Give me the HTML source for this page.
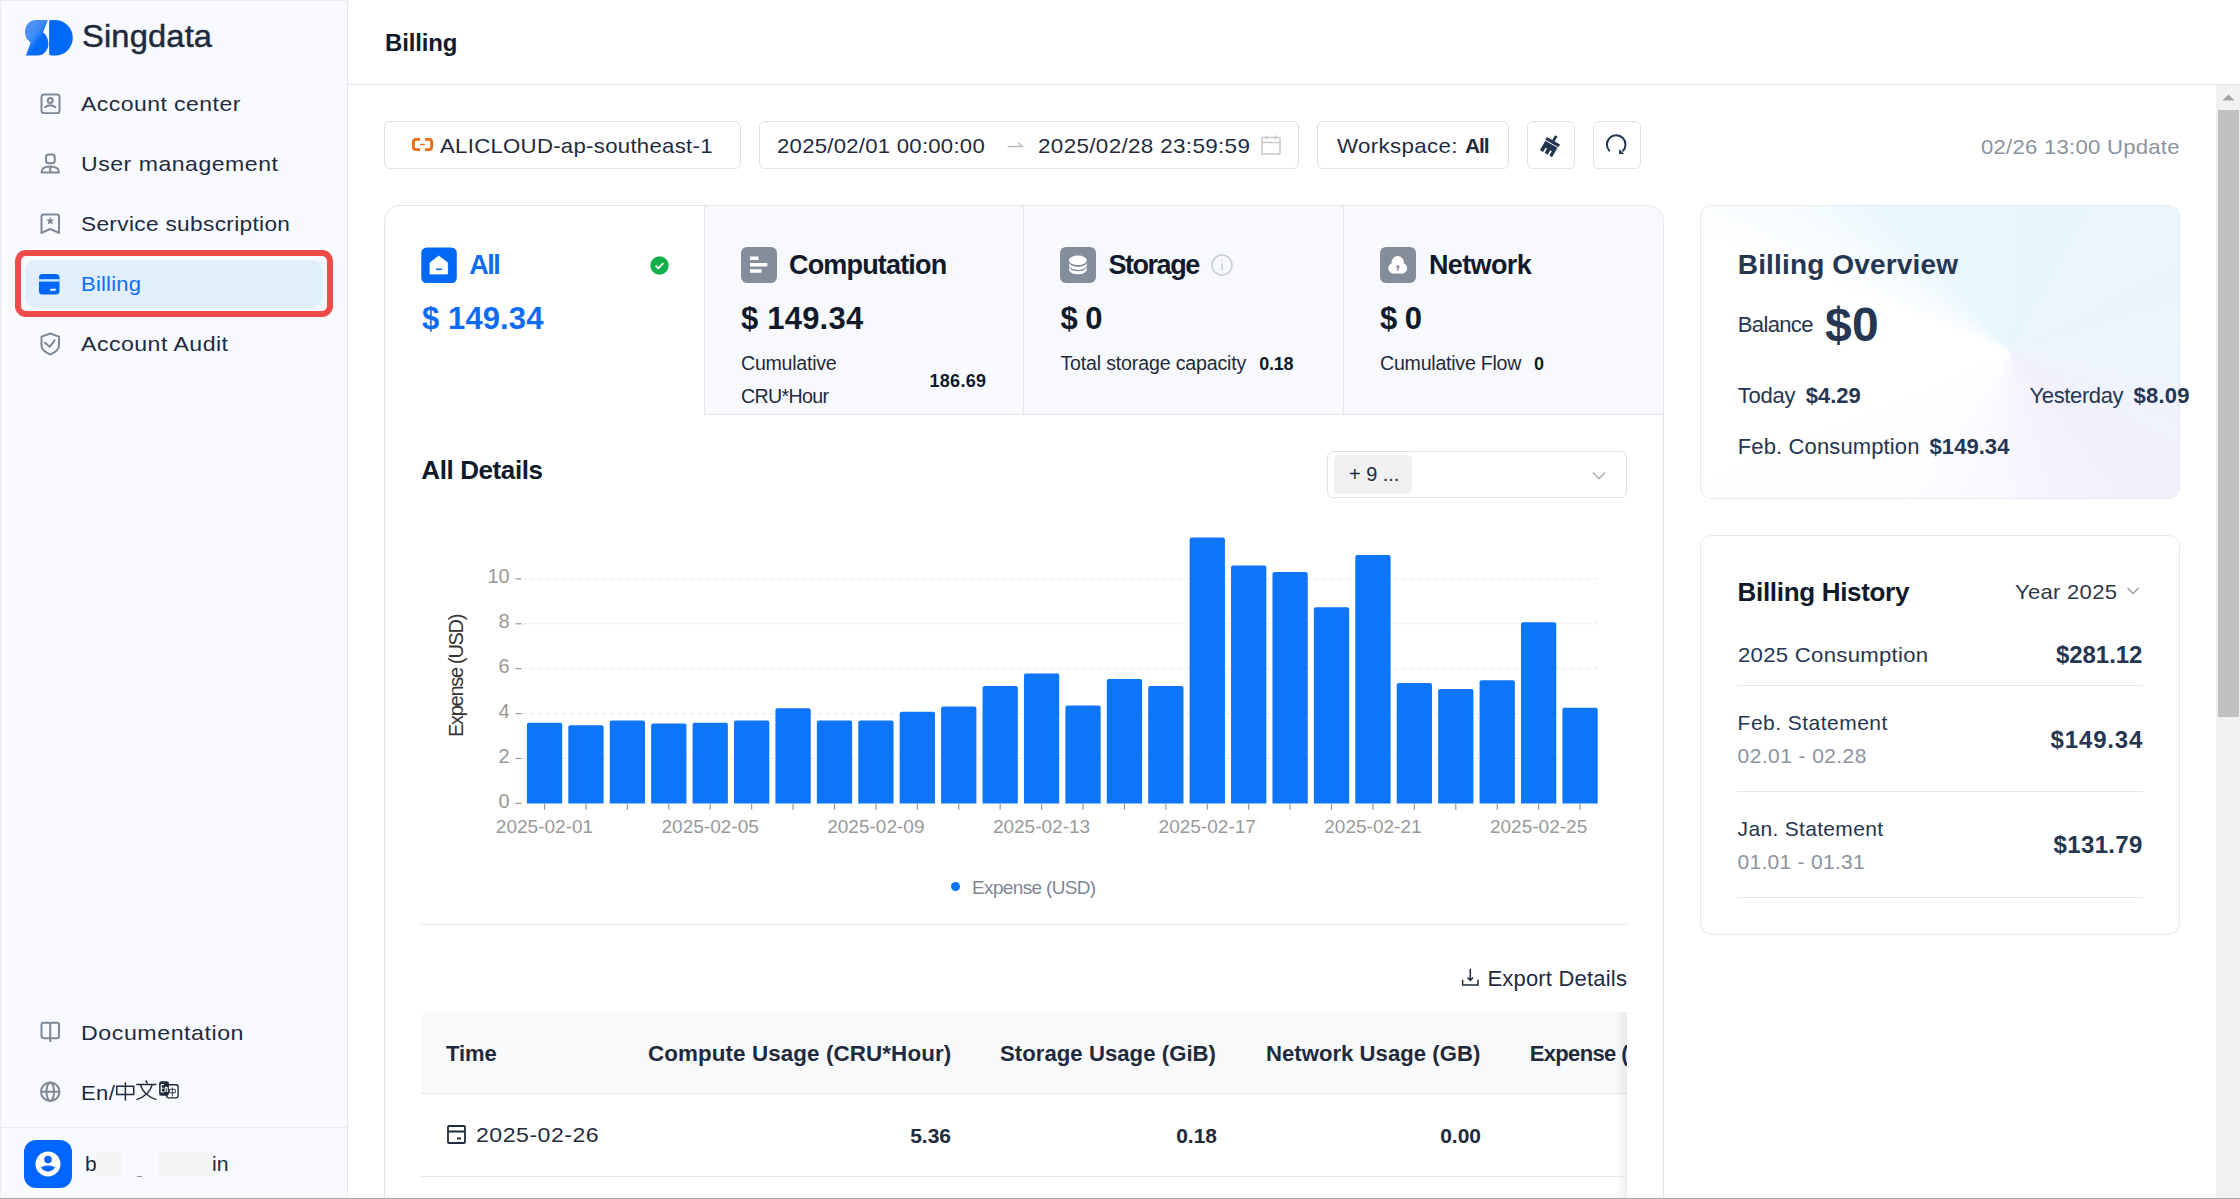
<!DOCTYPE html><html><head><meta charset="utf-8"><style>
html,body{margin:0;padding:0;width:2240px;height:1199px;overflow:hidden;background:#fff;position:relative}
body{font-family:"Liberation Sans",sans-serif}
.t{position:absolute;white-space:nowrap;line-height:1;font-family:"Liberation Sans",sans-serif}
</style></head><body>
<div style="position:absolute;left:0px;top:0px;width:347px;height:1199px;background:#f8faff;"></div>
<div style="position:absolute;left:347px;top:0px;width:1px;height:1199px;background:#e6e9ee;"></div>
<div style="position:absolute;left:0px;top:0px;width:347px;height:1px;background:#e9ecf0;"></div>
<div style="position:absolute;left:0px;top:0px;width:1px;height:1199px;background:#e9ecf0;"></div>
<svg style="position:absolute;left:25px;top:20px" width="48" height="36" viewBox="0 0 48 36">
<defs><linearGradient id="lg1" x1="0.25" y1="0.25" x2="0.6" y2="0.62"><stop offset="0" stop-color="#4b92f8"/><stop offset="0.45" stop-color="#3f8af8"/><stop offset="1" stop-color="#006af9"/></linearGradient></defs>
<path d="M26 0 H30 A17.8 17.8 0 0 1 30 35.6 H26.1 Q24.1 35.6 24.1 33.6 V2 Q24.1 0 26 0 Z" fill="#006af8"/>
<path d="M22.9 0 H11 C4.5 0 0 5.5 0 12 C0 16.5 2.3 20.4 5.6 22.4 L0.85 35.6 H12.8 C18.5 35.6 23.4 30 23.4 24 C23.4 18.5 21 14.5 17.9 12.5 Z" fill="url(#lg1)"/>
</svg>
<div class="t" style="left:81.90px;top:20.00px;font-size:32px;color:#1f2b3d;transform-origin:0 0;transform:scaleX(1.0205);letter-spacing:0.155px;-webkit-text-stroke:0.5px #1f2b3d;">Singdata</div>
<div style="position:absolute;left:15px;top:250.3px;width:317.5px;height:66.4px;border:6px solid #f04b4b;border-radius:11px;box-sizing:border-box;"></div>
<div style="position:absolute;left:25px;top:260px;width:298px;height:48px;background:#e1effd;border-radius:11px;"></div>
<div class="t" style="left:81.00px;top:93.00px;font-size:21px;color:#1f2b3d;transform-origin:0 0;transform:scaleX(1.0961);letter-spacing:0.405px;">Account center</div>
<div class="t" style="left:81.00px;top:153.00px;font-size:21px;color:#1f2b3d;transform-origin:0 0;transform:scaleX(1.0980);letter-spacing:0.472px;">User management</div>
<div class="t" style="left:81.00px;top:213.00px;font-size:21px;color:#1f2b3d;transform-origin:0 0;transform:scaleX(1.0784);letter-spacing:0.308px;">Service subscription</div>
<div class="t" style="left:81.00px;top:273.00px;font-size:21px;color:#0d6efd;transform-origin:0 0;transform:scaleX(1.0491);letter-spacing:0.187px;">Billing</div>
<div class="t" style="left:81.00px;top:333.00px;font-size:21px;color:#1f2b3d;transform-origin:0 0;transform:scaleX(1.1013);letter-spacing:0.422px;">Account Audit</div>
<svg style="position:absolute;left:39.5px;top:93px" width="21" height="21" viewBox="0 0 21 21" fill="none" stroke="#7d8796" stroke-width="2" stroke-linejoin="round"><rect x="1.5" y="1.6" width="18" height="18.6" rx="2.5"/><circle cx="10.25" cy="7.6" r="2.5"/><path d="M5 14.2 Q10.25 10.3 15.5 14.2" stroke-linecap="round"/></svg>
<svg style="position:absolute;left:39.5px;top:153px" width="21" height="21" viewBox="0 0 21 21" fill="none" stroke="#7d8796" stroke-width="2" stroke-linejoin="round"><rect x="6" y="1.6" width="8.8" height="8.6" rx="2.8"/><path d="M1.5 19.6 H19 Q19 13.6 10.25 13.6 Q1.5 13.6 1.5 19.6 Z M10.25 14 V19.5"/></svg>
<svg style="position:absolute;left:39.5px;top:213px" width="21" height="21" viewBox="0 0 21 21" fill="none" stroke="#7d8796" stroke-width="2" stroke-linejoin="round"><path d="M1.5 19.9 V3.5 Q1.5 1.6 3.5 1.6 H17 Q19 1.6 19 3.5 V19.9 L10.25 16 Z"/><path d="M10.25 4 L11.4 6.6 L14.2 6.8 L12.1 8.6 L12.8 11.4 L10.25 9.9 L7.7 11.4 L8.4 8.6 L6.3 6.8 L9.1 6.6 Z" fill="#7d8796" stroke="none"/></svg>
<svg style="position:absolute;left:39.3px;top:273.5px" width="21" height="21" viewBox="0 0 21 21"><rect x="0" y="0" width="20.5" height="20.5" rx="3.5" fill="#0066fa"/><rect x="0" y="5.2" width="20.5" height="2.4" fill="#c5ecff"/><path d="M11.6 14.8 H17 L16.3 16.8 H10.9 Z" fill="#fff"/></svg>
<svg style="position:absolute;left:39.5px;top:331.5px" width="21" height="24" viewBox="0 0 21 24" fill="none" stroke="#7d8796" stroke-width="2" stroke-linejoin="round"><path d="M10.25 1.5 L19 4.6 V13.5 Q19 18.8 10.25 22.5 Q1.5 18.8 1.5 13.5 V4.6 Z"/><path d="M4.9 10.7 L9.75 14.8 L14.6 8.4" stroke-linecap="round"/></svg>
<div class="t" style="left:81.25px;top:1022.00px;font-size:21px;color:#1f2b3d;transform-origin:0 0;transform:scaleX(1.1055);letter-spacing:0.481px;">Documentation</div>
<svg style="position:absolute;left:39.5px;top:1020.5px" width="21" height="22" viewBox="0 0 21 22" fill="none" stroke="#7d8796" stroke-width="2" stroke-linejoin="round"><path d="M10.25 3.6 Q10.25 1.8 8.3 1.8 H3.3 Q1.5 1.8 1.5 3.6 V15 Q1.5 17.3 3.8 17.3 H16.8 Q19 17.3 19 15 V3.6 Q19 1.8 17.2 1.8 H12.2 Q10.25 1.8 10.25 3.6 V21"/></svg>
<div class="t" style="left:81.25px;top:1082.00px;font-size:21px;color:#1f2b3d;transform-origin:0 0;transform:scaleX(1.0530);letter-spacing:0.341px;">En/</div>
<svg style="position:absolute;left:39.5px;top:1080.5px" width="21" height="22" viewBox="0 0 21 22" fill="none" stroke="#7d8796" stroke-width="2" stroke-linejoin="round"><circle cx="10.25" cy="10.7" r="9.2"/><ellipse cx="10.25" cy="10.7" rx="3.8" ry="9.2"/><path d="M1 10.7 H19.5"/></svg>
<svg style="position:absolute;left:116px;top:1080px" width="42" height="22" viewBox="0 0 42 22" fill="none" stroke="#1f2b3d" stroke-width="1.5">
<rect x="0.75" y="6.25" width="17" height="8.25"/><path d="M9.4 2.3 V20.7"/>
<path d="M29.7 0.5 L31.4 3.4 M20.25 4.5 H40.4 M24.4 4.6 Q27.5 15.5 40.4 19.6 M36.3 4.6 Q33.2 15.5 20.4 19.6"/></svg>
<svg style="position:absolute;left:158px;top:1080px" width="22" height="20" viewBox="0 0 22 20">
<rect x="8.6" y="4.8" width="11.5" height="13.1" rx="2.3" fill="#fff" stroke="#1f2b3d" stroke-width="1.4"/>
<path d="M14.3 7.5 V16.5 M11.5 9.3 H17.3 V12.8 H11.5 Z" stroke="#1f2b3d" stroke-width="0.9" fill="none"/>
<rect x="1.1" y="1.25" width="9.8" height="14.45" rx="2.2" fill="#1f2b3d"/>
<path d="M3.2 4.5 H6 M3.2 4.5 V12 H6 M3.2 8.2 H5.6 M7.2 12 V8.2 Q7.2 7.4 8.2 7.4 Q9.2 7.4 9.2 8.2 V12" stroke="#fff" stroke-width="1.1" fill="none"/></svg>
<div style="position:absolute;left:1px;top:1127px;width:346px;height:1px;background:#e8ebf0;"></div>
<svg style="position:absolute;left:24px;top:1140px" width="48" height="48" viewBox="0 0 48 48">
<rect width="48" height="48" rx="12" fill="#0066ff"/><circle cx="24" cy="24" r="12.5" fill="#fff"/>
<circle cx="24" cy="19.5" r="3.8" fill="#0066ff"/><path d="M16.8 27.5 Q24 23.5 31.2 27.5 Q28 31.5 24 31.5 Q20 31.5 16.8 27.5 Z" fill="#0066ff"/></svg>
<div class="t" style="left:85.00px;top:1153.00px;font-size:21px;color:#1f2b3d;">b</div>
<div style="position:absolute;left:96px;top:1152px;width:25px;height:24px;background:#f4f5f7;"></div>
<div style="position:absolute;left:157px;top:1152px;width:56px;height:24px;background:#f4f5f7;"></div>
<div style="position:absolute;left:136.5px;top:1175.5px;width:5px;height:1px;background:#8d939c;"></div>
<div class="t" style="left:212.00px;top:1153.00px;font-size:21px;color:#1f2b3d;transform-origin:0 0;transform:scaleX(1.0137);letter-spacing:0.095px;">in</div>
<div style="position:absolute;left:348px;top:0px;width:1868px;height:84px;background:#fff;"></div>
<div style="position:absolute;left:348px;top:84px;width:1892px;height:1px;background:#e6e8ec;"></div>
<div class="t" style="left:385.00px;top:31.00px;font-size:24.5px;color:#0f1a2b;transform-origin:0 0;transform:scaleX(0.9771);font-weight:700;letter-spacing:-0.125px;">Billing</div>
<div style="position:absolute;left:348px;top:85px;width:1868px;height:1114px;background:#fff;"></div>
<div style="position:absolute;left:2216px;top:85px;width:24px;height:1114px;background:#f1f1f1;"></div>
<div style="position:absolute;left:2218px;top:110px;width:21px;height:607px;background:#c1c1c1;"></div>
<svg style="position:absolute;left:2222px;top:94px" width="13" height="7" viewBox="0 0 13 7"><path d="M0.5 6.5 L6.5 0.5 L12.5 6.5 Z" fill="#a3a3a3"/></svg>
<div style="position:absolute;left:384px;top:121px;width:357px;height:48px;border:1px solid #dde1e7;border-radius:6px;box-sizing:border-box;background:#fff;"></div>
<svg style="position:absolute;left:412px;top:138px" width="21" height="13" viewBox="0 0 21 13" fill="none" stroke="#f06a10" stroke-width="2.8">
<path d="M8 1.4 H4 Q1.4 1.4 1.4 4 V9 Q1.4 11.6 4 11.6 H8 M13 1.4 H17 Q19.6 1.4 19.6 4 V9 Q19.6 11.6 17 11.6 H13"/><path d="M8.2 6.5 H12.8" stroke-width="1.5"/></svg>
<div class="t" style="left:440.00px;top:135.00px;font-size:21px;color:#1f2b3d;transform-origin:0 0;transform:scaleX(1.0566);letter-spacing:0.263px;">ALICLOUD-ap-southeast-1</div>
<div style="position:absolute;left:759px;top:121px;width:540px;height:48px;border:1px solid #dde1e7;border-radius:6px;box-sizing:border-box;background:#fff;"></div>
<div class="t" style="left:776.70px;top:135.00px;font-size:21px;color:#1f2b3d;transform-origin:0 0;transform:scaleX(1.0546);letter-spacing:0.237px;">2025/02/01 00:00:00</div>
<svg style="position:absolute;left:1007px;top:140px" width="17" height="8" viewBox="0 0 17 8" fill="none" stroke="#b5bac2" stroke-width="1.3"><path d="M0.5 6.5 H15.5 L11 2.5"/></svg>
<div class="t" style="left:1037.70px;top:135.00px;font-size:21px;color:#1f2b3d;transform-origin:0 0;transform:scaleX(1.0698);letter-spacing:0.299px;">2025/02/28 23:59:59</div>
<svg style="position:absolute;left:1261px;top:135px" width="20" height="20" viewBox="0 0 20 20" fill="none" stroke="#c6c8cc" stroke-width="1.5"><rect x="1" y="2.5" width="18" height="16.5" rx="0.3"/><path d="M1 7.5 H19 M5.5 0.5 V4.5 M14.5 0.5 V4.5"/></svg>
<div style="position:absolute;left:1317px;top:121px;width:192px;height:48px;border:1px solid #dde1e7;border-radius:6px;box-sizing:border-box;background:#fff;"></div>
<div class="t" style="left:1336.50px;top:135.00px;font-size:21px;color:#1f2b3d;transform-origin:0 0;transform:scaleX(1.0636);letter-spacing:0.315px;">Workspace:</div>
<div class="t" style="left:1465.00px;top:135.00px;font-size:21px;color:#1f2b3d;font-weight:700;letter-spacing:-1.090px;">All</div>
<div style="position:absolute;left:1527px;top:121px;width:48px;height:48px;border:1px solid #dde1e7;border-radius:6px;box-sizing:border-box;background:#fff;"></div>
<svg style="position:absolute;left:1539px;top:132.5px" width="24" height="24" viewBox="0 0 24 24">
<g transform="rotate(30 12 12)" fill="#223450">
<rect x="10.6" y="1.5" width="2.8" height="6"/><rect x="4.5" y="7" width="15" height="3.2"/>
<path d="M5 11.2 H19 V22 H15.8 V17 H14 V22 H10.4 V17 H8.6 V22 H5 Z"/></g></svg>
<div style="position:absolute;left:1593px;top:121px;width:48px;height:48px;border:1px solid #dde1e7;border-radius:6px;box-sizing:border-box;background:#fff;"></div>
<svg style="position:absolute;left:1604px;top:133px" width="24" height="24" viewBox="0 0 24 24" fill="none" stroke="#223450" stroke-width="2">
<path d="M5.7 18.2 A9.3 9.3 0 1 1 18.6 18.3" stroke-width="2"/><path d="M15.4 16 L15 21 L20 21 Z" fill="#223450" stroke="none"/></svg>
<div class="t" style="left:1981.00px;top:136.00px;font-size:21px;color:#8a93a2;transform-origin:0 0;transform:scaleX(1.0532);letter-spacing:0.235px;">02/26 13:00 Update</div>
<div style="position:absolute;left:384px;top:205px;width:1280px;height:1100px;border:1px solid #e3e6eb;border-radius:16px;box-sizing:border-box;background:#fff;overflow:hidden"><div style="position:absolute;left:319px;top:0;width:960px;height:209px;background:#f8f9fd;border-left:1px solid #e3e6eb;border-bottom:1px solid #e3e6eb;box-sizing:border-box"></div><div style="position:absolute;left:638px;top:0;width:1px;height:209px;background:#e3e6eb"></div><div style="position:absolute;left:958px;top:0;width:1px;height:209px;background:#e3e6eb"></div></div>
<svg style="position:absolute;left:421px;top:247px" width="36" height="36" viewBox="0 0 36 36"><rect x="0.3" y="0.5" width="35.5" height="35.8" rx="5.5" fill="#0068f5"/><path d="M9 15.8 L17.8 9 L26.6 15.8 V27 H9 Z" fill="#fff" stroke="#fff" stroke-width="0.8" stroke-linejoin="round"/><path d="M15 22.3 H20.9" stroke="#0068f5" stroke-width="1.6"/></svg>
<div class="t" style="left:469.30px;top:252.00px;font-size:27px;color:#0d6cf2;font-weight:700;letter-spacing:-1.530px;">All</div>
<svg style="position:absolute;left:649.5px;top:255.5px" width="19" height="19" viewBox="0 0 19 19"><circle cx="9.5" cy="9.5" r="9.2" fill="#12b04a"/><path d="M5.6 9.7 L8.3 12.3 L13.3 7.2" fill="none" stroke="#fff" stroke-width="1.8"/></svg>
<div class="t" style="left:422.00px;top:303.00px;font-size:31px;color:#0d6cf2;font-weight:700;letter-spacing:0.108px;">$ 149.34</div>
<svg style="position:absolute;left:741px;top:247px" width="36" height="36" viewBox="0 0 36 36"><rect width="36" height="36" rx="6" fill="#838d9c"/><path d="M9 11.25 H17.5 M9 17.75 H26.3 M9 24.05 H20.7" stroke="#fff" stroke-width="3.4"/></svg>
<div class="t" style="left:789.00px;top:252.00px;font-size:27px;color:#0f1a2b;font-weight:700;letter-spacing:-0.826px;">Computation</div>
<div class="t" style="left:741.00px;top:303.00px;font-size:31px;color:#0f1a2b;font-weight:700;letter-spacing:0.208px;">$ 149.34</div>
<div class="t" style="left:741.00px;top:354.00px;font-size:19.6px;color:#1f2a3c;letter-spacing:-0.256px;">Cumulative</div>
<div class="t" style="left:741.00px;top:387.00px;font-size:19.6px;color:#1f2a3c;letter-spacing:-0.659px;">CRU*Hour</div>
<div class="t" style="left:929.50px;top:372.00px;font-size:18px;color:#0f1a2b;font-weight:700;letter-spacing:0.284px;">186.69</div>
<svg style="position:absolute;left:1060px;top:247px" width="36" height="36" viewBox="0 0 36 36"><rect width="36" height="36" rx="6" fill="#838d9c"/><path d="M9 19.5 A8.9 4.8 0 0 0 26.8 19.5 V22.5 A8.9 4.8 0 0 1 9 22.5 Z" fill="#fff"/><path d="M9 15.2 A8.9 4.8 0 0 0 26.8 15.2 V18.2 A8.9 4.8 0 0 1 9 18.2 Z" fill="#fff" transform="translate(0,0)"/><ellipse cx="17.9" cy="13.3" rx="8.9" ry="4.8" fill="#fff"/></svg>
<div class="t" style="left:1108.40px;top:252.00px;font-size:27px;color:#0f1a2b;font-weight:700;letter-spacing:-1.446px;">Storage</div>
<svg style="position:absolute;left:1211px;top:254px" width="22" height="22" viewBox="0 0 22 22" fill="none" stroke="#c7ccd4" stroke-width="1.5"><circle cx="11" cy="11" r="10"/><path d="M11 9.5 V16.5"/><circle cx="11" cy="6.3" r="0.9" fill="#c7ccd4" stroke="none"/></svg>
<div class="t" style="left:1060.40px;top:303.00px;font-size:31px;color:#0f1a2b;font-weight:700;letter-spacing:-0.545px;">$ 0</div>
<div class="t" style="left:1060.40px;top:354.00px;font-size:19.6px;color:#1f2a3c;letter-spacing:-0.168px;">Total storage capacity</div>
<div class="t" style="left:1259.20px;top:355.00px;font-size:18px;color:#0f1a2b;font-weight:700;letter-spacing:-0.270px;">0.18</div>
<svg style="position:absolute;left:1380px;top:247px" width="36" height="36" viewBox="0 0 36 36"><rect width="36" height="36" rx="6" fill="#838d9c"/><circle cx="17.7" cy="15.3" r="6.2" fill="#fff"/><circle cx="13.6" cy="21.2" r="5.3" fill="#fff"/><circle cx="21.9" cy="21.2" r="5.3" fill="#fff"/><rect x="13.6" y="17" width="8.3" height="9.5" fill="#fff"/><path d="M17.9 23.8 V19.5" stroke="#838d9c" stroke-width="1.4"/><path d="M15.4 20.6 L17.9 17.8 L20.4 20.6 Z" fill="#838d9c"/></svg>
<div class="t" style="left:1429.00px;top:252.00px;font-size:27px;color:#0f1a2b;font-weight:700;letter-spacing:-0.642px;">Network</div>
<div class="t" style="left:1380.00px;top:303.00px;font-size:31px;color:#0f1a2b;font-weight:700;letter-spacing:-0.545px;">$ 0</div>
<div class="t" style="left:1380.00px;top:354.00px;font-size:19.6px;color:#1f2a3c;letter-spacing:-0.246px;">Cumulative Flow</div>
<div class="t" style="left:1534.00px;top:355.00px;font-size:18px;color:#0f1a2b;font-weight:700;">0</div>
<div class="t" style="left:421.30px;top:457.00px;font-size:26px;color:#0f1a2b;font-weight:700;letter-spacing:-0.401px;">All Details</div>
<div style="position:absolute;left:1327px;top:451px;width:300px;height:47px;border:1px solid #dfe2e7;border-radius:6px;box-sizing:border-box;background:#fff;"></div>
<div style="position:absolute;left:1334px;top:455px;width:78px;height:38.5px;background:#f0f0f1;border-radius:5px;"></div>
<div class="t" style="left:1348.50px;top:464.00px;font-size:20px;color:#1f2b3d;transform-origin:0 0;transform:scaleX(0.9958);letter-spacing:-0.015px;">+ 9 ...</div>
<svg style="position:absolute;left:1592px;top:470.5px" width="14" height="10" viewBox="0 0 14 10" fill="none" stroke="#adb2ba" stroke-width="1.6"><path d="M1 1.5 L7 7.5 L13 1.5"/></svg>
<svg style="position:absolute;left:0;top:0" width="2240" height="1199" viewBox="0 0 2240 1199"><line x1="515.5" y1="803.4" x2="521.5" y2="803.4" stroke="#999" stroke-width="1.2"/><line x1="523" y1="758.5" x2="1598" y2="758.5" stroke="#e8e8e8" stroke-width="1" stroke-dasharray="4 4"/><line x1="515.5" y1="758.5" x2="521.5" y2="758.5" stroke="#999" stroke-width="1.2"/><line x1="523" y1="713.6" x2="1598" y2="713.6" stroke="#e8e8e8" stroke-width="1" stroke-dasharray="4 4"/><line x1="515.5" y1="713.6" x2="521.5" y2="713.6" stroke="#999" stroke-width="1.2"/><line x1="523" y1="668.7" x2="1598" y2="668.7" stroke="#e8e8e8" stroke-width="1" stroke-dasharray="4 4"/><line x1="515.5" y1="668.7" x2="521.5" y2="668.7" stroke="#999" stroke-width="1.2"/><line x1="523" y1="623.8" x2="1598" y2="623.8" stroke="#e8e8e8" stroke-width="1" stroke-dasharray="4 4"/><line x1="515.5" y1="623.8" x2="521.5" y2="623.8" stroke="#999" stroke-width="1.2"/><line x1="523" y1="578.9" x2="1598" y2="578.9" stroke="#e8e8e8" stroke-width="1" stroke-dasharray="4 4"/><line x1="515.5" y1="578.9" x2="521.5" y2="578.9" stroke="#999" stroke-width="1.2"/><path d="M526.90 803.4 V724.80 Q526.90 722.80 528.90 722.80 H560.20 Q562.20 722.80 562.20 724.80 V803.4 Z" fill="#0d75f8"/><line x1="544.55" y1="803.4" x2="544.55" y2="809.8" stroke="#999" stroke-width="1.2"/><path d="M568.32 803.4 V727.20 Q568.32 725.20 570.32 725.20 H601.62 Q603.62 725.20 603.62 727.20 V803.4 Z" fill="#0d75f8"/><line x1="585.97" y1="803.4" x2="585.97" y2="809.8" stroke="#999" stroke-width="1.2"/><path d="M609.74 803.4 V722.40 Q609.74 720.40 611.74 720.40 H643.04 Q645.04 720.40 645.04 722.40 V803.4 Z" fill="#0d75f8"/><line x1="627.39" y1="803.4" x2="627.39" y2="809.8" stroke="#999" stroke-width="1.2"/><path d="M651.16 803.4 V725.60 Q651.16 723.60 653.16 723.60 H684.46 Q686.46 723.60 686.46 725.60 V803.4 Z" fill="#0d75f8"/><line x1="668.81" y1="803.4" x2="668.81" y2="809.8" stroke="#999" stroke-width="1.2"/><path d="M692.58 803.4 V724.80 Q692.58 722.80 694.58 722.80 H725.88 Q727.88 722.80 727.88 724.80 V803.4 Z" fill="#0d75f8"/><line x1="710.23" y1="803.4" x2="710.23" y2="809.8" stroke="#999" stroke-width="1.2"/><path d="M734.00 803.4 V722.40 Q734.00 720.40 736.00 720.40 H767.30 Q769.30 720.40 769.30 722.40 V803.4 Z" fill="#0d75f8"/><line x1="751.65" y1="803.4" x2="751.65" y2="809.8" stroke="#999" stroke-width="1.2"/><path d="M775.42 803.4 V710.30 Q775.42 708.30 777.42 708.30 H808.72 Q810.72 708.30 810.72 710.30 V803.4 Z" fill="#0d75f8"/><line x1="793.07" y1="803.4" x2="793.07" y2="809.8" stroke="#999" stroke-width="1.2"/><path d="M816.84 803.4 V722.40 Q816.84 720.40 818.84 720.40 H850.14 Q852.14 720.40 852.14 722.40 V803.4 Z" fill="#0d75f8"/><line x1="834.49" y1="803.4" x2="834.49" y2="809.8" stroke="#999" stroke-width="1.2"/><path d="M858.26 803.4 V722.40 Q858.26 720.40 860.26 720.40 H891.56 Q893.56 720.40 893.56 722.40 V803.4 Z" fill="#0d75f8"/><line x1="875.91" y1="803.4" x2="875.91" y2="809.8" stroke="#999" stroke-width="1.2"/><path d="M899.68 803.4 V713.80 Q899.68 711.80 901.68 711.80 H932.98 Q934.98 711.80 934.98 713.80 V803.4 Z" fill="#0d75f8"/><line x1="917.33" y1="803.4" x2="917.33" y2="809.8" stroke="#999" stroke-width="1.2"/><path d="M941.10 803.4 V708.40 Q941.10 706.40 943.10 706.40 H974.40 Q976.40 706.40 976.40 708.40 V803.4 Z" fill="#0d75f8"/><line x1="958.75" y1="803.4" x2="958.75" y2="809.8" stroke="#999" stroke-width="1.2"/><path d="M982.52 803.4 V688.10 Q982.52 686.10 984.52 686.10 H1015.82 Q1017.82 686.10 1017.82 688.10 V803.4 Z" fill="#0d75f8"/><line x1="1000.17" y1="803.4" x2="1000.17" y2="809.8" stroke="#999" stroke-width="1.2"/><path d="M1023.94 803.4 V675.50 Q1023.94 673.50 1025.94 673.50 H1057.24 Q1059.24 673.50 1059.24 675.50 V803.4 Z" fill="#0d75f8"/><line x1="1041.59" y1="803.4" x2="1041.59" y2="809.8" stroke="#999" stroke-width="1.2"/><path d="M1065.36 803.4 V707.60 Q1065.36 705.60 1067.36 705.60 H1098.66 Q1100.66 705.60 1100.66 707.60 V803.4 Z" fill="#0d75f8"/><line x1="1083.01" y1="803.4" x2="1083.01" y2="809.8" stroke="#999" stroke-width="1.2"/><path d="M1106.78 803.4 V681.10 Q1106.78 679.10 1108.78 679.10 H1140.08 Q1142.08 679.10 1142.08 681.10 V803.4 Z" fill="#0d75f8"/><line x1="1124.43" y1="803.4" x2="1124.43" y2="809.8" stroke="#999" stroke-width="1.2"/><path d="M1148.20 803.4 V688.10 Q1148.20 686.10 1150.20 686.10 H1181.50 Q1183.50 686.10 1183.50 688.10 V803.4 Z" fill="#0d75f8"/><line x1="1165.85" y1="803.4" x2="1165.85" y2="809.8" stroke="#999" stroke-width="1.2"/><path d="M1189.62 803.4 V539.40 Q1189.62 537.40 1191.62 537.40 H1222.92 Q1224.92 537.40 1224.92 539.40 V803.4 Z" fill="#0d75f8"/><line x1="1207.27" y1="803.4" x2="1207.27" y2="809.8" stroke="#999" stroke-width="1.2"/><path d="M1231.04 803.4 V567.50 Q1231.04 565.50 1233.04 565.50 H1264.34 Q1266.34 565.50 1266.34 567.50 V803.4 Z" fill="#0d75f8"/><line x1="1248.69" y1="803.4" x2="1248.69" y2="809.8" stroke="#999" stroke-width="1.2"/><path d="M1272.46 803.4 V574.00 Q1272.46 572.00 1274.46 572.00 H1305.76 Q1307.76 572.00 1307.76 574.00 V803.4 Z" fill="#0d75f8"/><line x1="1290.11" y1="803.4" x2="1290.11" y2="809.8" stroke="#999" stroke-width="1.2"/><path d="M1313.88 803.4 V609.30 Q1313.88 607.30 1315.88 607.30 H1347.18 Q1349.18 607.30 1349.18 609.30 V803.4 Z" fill="#0d75f8"/><line x1="1331.53" y1="803.4" x2="1331.53" y2="809.8" stroke="#999" stroke-width="1.2"/><path d="M1355.30 803.4 V557.10 Q1355.30 555.10 1357.30 555.10 H1388.60 Q1390.60 555.10 1390.60 557.10 V803.4 Z" fill="#0d75f8"/><line x1="1372.95" y1="803.4" x2="1372.95" y2="809.8" stroke="#999" stroke-width="1.2"/><path d="M1396.72 803.4 V685.10 Q1396.72 683.10 1398.72 683.10 H1430.02 Q1432.02 683.10 1432.02 685.10 V803.4 Z" fill="#0d75f8"/><line x1="1414.37" y1="803.4" x2="1414.37" y2="809.8" stroke="#999" stroke-width="1.2"/><path d="M1438.14 803.4 V691.00 Q1438.14 689.00 1440.14 689.00 H1471.44 Q1473.44 689.00 1473.44 691.00 V803.4 Z" fill="#0d75f8"/><line x1="1455.79" y1="803.4" x2="1455.79" y2="809.8" stroke="#999" stroke-width="1.2"/><path d="M1479.56 803.4 V682.20 Q1479.56 680.20 1481.56 680.20 H1512.86 Q1514.86 680.20 1514.86 682.20 V803.4 Z" fill="#0d75f8"/><line x1="1497.21" y1="803.4" x2="1497.21" y2="809.8" stroke="#999" stroke-width="1.2"/><path d="M1520.98 803.4 V624.30 Q1520.98 622.30 1522.98 622.30 H1554.28 Q1556.28 622.30 1556.28 624.30 V803.4 Z" fill="#0d75f8"/><line x1="1538.63" y1="803.4" x2="1538.63" y2="809.8" stroke="#999" stroke-width="1.2"/><path d="M1562.40 803.4 V709.80 Q1562.40 707.80 1564.40 707.80 H1595.70 Q1597.70 707.80 1597.70 709.80 V803.4 Z" fill="#0d75f8"/><line x1="1580.05" y1="803.4" x2="1580.05" y2="809.8" stroke="#999" stroke-width="1.2"/></svg>
<div class="t" style="left:498.60px;top:791.00px;font-size:20px;color:#999999;">0</div>
<div class="t" style="left:498.60px;top:746.00px;font-size:20px;color:#999999;">2</div>
<div class="t" style="left:498.60px;top:701.00px;font-size:20px;color:#999999;">4</div>
<div class="t" style="left:498.60px;top:656.00px;font-size:20px;color:#999999;">6</div>
<div class="t" style="left:498.60px;top:611.00px;font-size:20px;color:#999999;">8</div>
<div class="t" style="left:487.50px;top:566.00px;font-size:20px;color:#999999;">10</div>
<div class="t" style="left:495.85px;top:817.00px;font-size:19px;color:#999999;letter-spacing:0.013px;">2025-02-01</div>
<div class="t" style="left:661.53px;top:817.00px;font-size:19px;color:#999999;letter-spacing:0.013px;">2025-02-05</div>
<div class="t" style="left:827.21px;top:817.00px;font-size:19px;color:#999999;letter-spacing:0.013px;">2025-02-09</div>
<div class="t" style="left:992.89px;top:817.00px;font-size:19px;color:#999999;letter-spacing:0.013px;">2025-02-13</div>
<div class="t" style="left:1158.57px;top:817.00px;font-size:19px;color:#999999;letter-spacing:0.013px;">2025-02-17</div>
<div class="t" style="left:1324.25px;top:817.00px;font-size:19px;color:#999999;letter-spacing:0.013px;">2025-02-21</div>
<div class="t" style="left:1489.93px;top:817.00px;font-size:19px;color:#999999;letter-spacing:0.013px;">2025-02-25</div>
<div class="t" style="left:446.27px;top:737.30px;font-size:20px;color:#333333;letter-spacing:-1.292px;transform-origin:0 0;transform:rotate(-90deg)">Expense (USD)</div>
<div style="position:absolute;left:951px;top:882px;width:9px;height:9px;border-radius:50%;background:#0d75f8"></div>
<div class="t" style="left:972.10px;top:878.00px;font-size:19px;color:#7d8797;letter-spacing:-0.663px;">Expense (USD)</div>
<div style="position:absolute;left:421px;top:924px;width:1206px;height:1px;background:#e8eaee;"></div>
<svg style="position:absolute;left:1461px;top:968px" width="19" height="19" viewBox="0 0 19 19" fill="none" stroke="#1f2b3d" stroke-width="1.5"><path d="M9.3 0.8 V12.2 M6.6 9.4 L9.3 12.4 L12 9.4 M1.6 11.8 V17.1 H17 V11.8"/></svg>
<div class="t" style="left:1487.40px;top:968.00px;font-size:22px;color:#1f2b3d;letter-spacing:0.196px;">Export Details</div>
<div style="position:absolute;left:421px;top:1012px;width:1206px;height:81px;background:#f8f9fa;border-radius:6px 0 0 0;"></div>
<div style="position:absolute;left:421px;top:1093px;width:1206px;height:1px;background:#e5e8ec;"></div>
<div class="t" style="left:446.20px;top:1043.00px;font-size:22px;color:#1f2b3d;transform-origin:0 0;transform:scaleX(0.9982);font-weight:700;letter-spacing:-0.013px;">Time</div>
<div class="t" style="left:647.90px;top:1043.00px;font-size:22px;color:#1f2b3d;transform-origin:0 0;transform:scaleX(1.0175);font-weight:700;letter-spacing:0.095px;">Compute Usage (CRU*Hour)</div>
<div class="t" style="left:1000.00px;top:1043.00px;font-size:22px;color:#1f2b3d;transform-origin:0 0;transform:scaleX(1.0067);font-weight:700;letter-spacing:0.034px;">Storage Usage (GiB)</div>
<div class="t" style="left:1265.70px;top:1043.00px;font-size:22px;color:#1f2b3d;transform-origin:0 0;transform:scaleX(1.0051);font-weight:700;letter-spacing:0.027px;">Network Usage (GB)</div>
<div style="position:absolute;left:1529.7px;top:1012px;width:97.3px;height:81px;overflow:hidden">
<div class="t" style="left:0.00px;top:31.00px;font-size:22px;color:#1f2b3d;font-weight:700;letter-spacing:-0.645px;">Expense (USD)</div>
</div>
<div style="position:absolute;left:1615px;top:1012px;width:12px;height:187px;background:linear-gradient(90deg,rgba(30,40,60,0),rgba(30,40,60,0.07));"></div>
<svg style="position:absolute;left:447px;top:1125px" width="19" height="19" viewBox="0 0 19 19" fill="none" stroke="#1f2b3d" stroke-width="1.8"><rect x="1" y="1" width="17" height="17" rx="1"/><path d="M1 6.5 H18 M10 13.5 H14"/></svg>
<div class="t" style="left:475.60px;top:1124.00px;font-size:21px;color:#1f2b3d;transform-origin:0 0;transform:scaleX(1.0996);letter-spacing:0.463px;">2025-02-26</div>
<div class="t" style="left:910.15px;top:1125.00px;font-size:21px;color:#1f2b3d;font-weight:700;">5.36</div>
<div class="t" style="left:1176.15px;top:1125.00px;font-size:21px;color:#1f2b3d;font-weight:700;">0.18</div>
<div class="t" style="left:1440.15px;top:1125.00px;font-size:21px;color:#1f2b3d;font-weight:700;">0.00</div>
<div style="position:absolute;left:421px;top:1176px;width:1206px;height:1px;background:#e5e8ec;"></div>
<div style="position:absolute;left:1700px;top:205px;width:480px;height:294px;border:1px solid #e6e9ee;border-radius:12px;box-sizing:border-box;background:conic-gradient(from 0deg at 64.8% 50%,#e9f6fd 0deg,#ebf5fd 60deg,#eef4fe 100deg,#f3f0fd 135deg,#f7f4fe 170deg,#fdfcff 215deg,#ffffff 250deg,#ffffff 290deg,#e9f6fd 320deg,#e9f6fd 360deg);"></div>
<div class="t" style="left:1737.80px;top:251.00px;font-size:28px;color:#243651;font-weight:700;letter-spacing:0.151px;">Billing Overview</div>
<div class="t" style="left:1737.80px;top:314.00px;font-size:22px;color:#243651;letter-spacing:-0.638px;">Balance</div>
<div class="t" style="left:1825.00px;top:301.00px;font-size:48px;color:#243651;font-weight:700;letter-spacing:0.420px;">$0</div>
<div class="t" style="left:1737.80px;top:385.00px;font-size:22px;color:#243651;letter-spacing:-0.235px;">Today</div>
<div class="t" style="left:1805.80px;top:385.00px;font-size:22px;color:#243651;font-weight:700;letter-spacing:-0.027px;">$4.29</div>
<div class="t" style="left:2029.50px;top:385.00px;font-size:22px;color:#243651;letter-spacing:-0.365px;">Yesterday</div>
<div class="t" style="left:2133.50px;top:385.00px;font-size:22px;color:#243651;font-weight:700;letter-spacing:0.248px;">$8.09</div>
<div class="t" style="left:1737.80px;top:436.00px;font-size:22px;color:#243651;letter-spacing:0.124px;">Feb. Consumption</div>
<div class="t" style="left:1929.60px;top:436.00px;font-size:22px;color:#243651;font-weight:700;letter-spacing:0.045px;">$149.34</div>
<div style="position:absolute;left:1700px;top:535px;width:480px;height:400px;border:1px solid #e6e9ee;border-radius:12px;box-sizing:border-box;background:#fff;"></div>
<div class="t" style="left:1737.60px;top:579.00px;font-size:26px;color:#0f1a2b;font-weight:700;letter-spacing:-0.320px;">Billing History</div>
<div class="t" style="left:2014.70px;top:581.00px;font-size:21px;color:#2c3849;transform-origin:0 0;transform:scaleX(1.0514);letter-spacing:0.249px;">Year 2025</div>
<svg style="position:absolute;left:2126px;top:586px" width="14" height="10" viewBox="0 0 14 10" fill="none" stroke="#9aa1ab" stroke-width="1.5"><path d="M1.5 2 L7 7.5 L12.5 2"/></svg>
<div class="t" style="left:1737.60px;top:644.00px;font-size:21px;color:#243651;transform-origin:0 0;transform:scaleX(1.0548);letter-spacing:0.262px;">2025 Consumption</div>
<div class="t" style="left:2056.00px;top:643.00px;font-size:24px;color:#243651;font-weight:700;letter-spacing:-0.060px;">$281.12</div>
<div style="position:absolute;left:1737px;top:685px;width:406px;height:1px;background:#e6e8ec;"></div>
<div class="t" style="left:1737.60px;top:712.00px;font-size:21px;color:#243651;letter-spacing:0.474px;">Feb. Statement</div>
<div class="t" style="left:1737.60px;top:745.00px;font-size:21px;color:#8a93a2;letter-spacing:0.417px;">02.01 - 02.28</div>
<div class="t" style="left:2050.60px;top:728.00px;font-size:24px;color:#243651;font-weight:700;letter-spacing:0.840px;">$149.34</div>
<div style="position:absolute;left:1737px;top:791px;width:406px;height:1px;background:#e6e8ec;"></div>
<div class="t" style="left:1737.60px;top:818.00px;font-size:21px;color:#243651;letter-spacing:0.321px;">Jan. Statement</div>
<div class="t" style="left:1737.60px;top:851.00px;font-size:21px;color:#8a93a2;letter-spacing:0.267px;">01.01 - 01.31</div>
<div class="t" style="left:2053.60px;top:833.00px;font-size:24px;color:#243651;font-weight:700;letter-spacing:0.340px;">$131.79</div>
<div style="position:absolute;left:1737px;top:897px;width:406px;height:1px;background:#e6e8ec;"></div>
<div style="position:absolute;left:0px;top:1198px;width:2240px;height:1px;background:#a8a8a8;"></div>
</body></html>
